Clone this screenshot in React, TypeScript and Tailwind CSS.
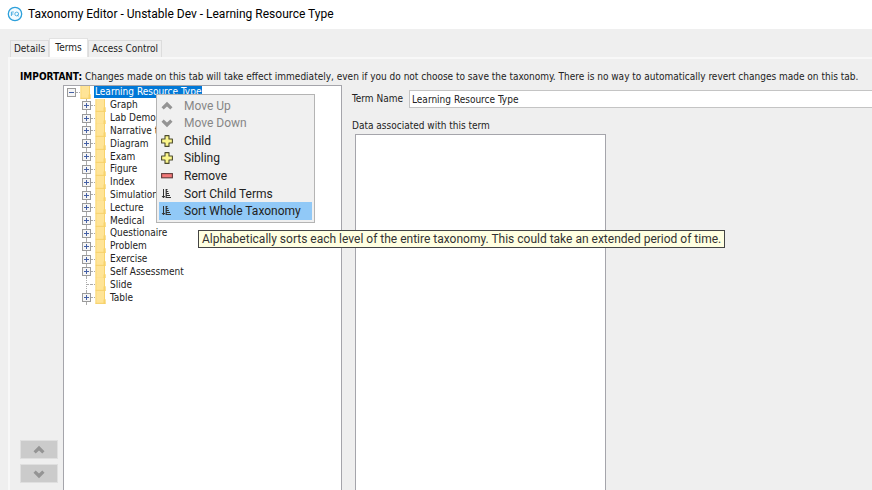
import { useState } from "react";

const TAHOMA = "font-['DejaVu_Sans_Condensed','DejaVu_Sans',sans-serif]";
const SEGOE = "font-[Roboto,'Open_Sans',sans-serif]";

const TERMS = [
  { name: "Graph", leaf: false },
  { name: "Lab Demo", leaf: false },
  { name: "Narrative t", leaf: false },
  { name: "Diagram", leaf: false },
  { name: "Exam", leaf: false },
  { name: "Figure", leaf: false },
  { name: "Index", leaf: false },
  { name: "Simulation", leaf: false },
  { name: "Lecture", leaf: false },
  { name: "Medical", leaf: false },
  { name: "Questionaire", leaf: false },
  { name: "Problem", leaf: false },
  { name: "Exercise", leaf: false },
  { name: "Self Assessment", leaf: false },
  { name: "Slide", leaf: true },
  { name: "Table", leaf: false },
];

function Logo() {
  return (
    <svg width="16" height="16" viewBox="0 0 16 16" fill="none" aria-hidden="true">
      <circle cx="8" cy="8" r="6.7" fill="#f4fbff" stroke="#2da0db" strokeWidth="1.3" />
      <path d="M4.4 10V6h2.4M4.4 8h2" stroke="#2da0db" strokeWidth="0.8" />
      <circle cx="9.7" cy="8" r="1.9" stroke="#2da0db" strokeWidth="0.8" />
      <path d="M10 8.8l1.7 1.5" stroke="#2da0db" strokeWidth="0.8" />
    </svg>
  );
}

function Chevron({ up = false }: { up?: boolean }) {
  return (
    <svg width="12" height="12" viewBox="0 0 12 12" aria-hidden="true">
      <path
        d={up ? "M6 1.8L11.5 7.2L9.3 9.5L6 6.4L2.7 9.5L.5 7.2Z" : "M6 10.2L11.5 4.8L9.3 2.5L6 5.6L2.7 2.5L.5 4.8Z"}
        fill="#949494"
      />
    </svg>
  );
}

function Plus() {
  return (
    <svg width="12" height="12" viewBox="0 0 12 12" aria-hidden="true">
      <path
        d="M4 .6h4V4h3.4v4H8v3.4H4V8H.6V4H4Z"
        fill="#fbf68c"
        stroke="#4d4c30"
        strokeWidth="1.1"
        strokeLinejoin="round"
      />
    </svg>
  );
}

function Minus() {
  return (
    <svg width="12" height="12" viewBox="0 0 12 12" aria-hidden="true">
      <rect x=".6" y="3.6" width="10.8" height="4.2" fill="#f17878" stroke="#633b3b" strokeWidth="1.1" />
    </svg>
  );
}

function SortIcon() {
  return (
    <svg width="12" height="12" viewBox="0 0 12 12" stroke="#333" fill="none" aria-hidden="true">
      <path d="M2.5 1v8.5M1 8l1.5 1.8L4 8" strokeWidth="1" />
      <path d="M4.8 1.5h1.7M4.8 3.5h2.5M4.8 5.5h3.2M4.8 7.5h4.2M4.8 9.5h5.2M5.2 1v9" strokeWidth="1.2" />
    </svg>
  );
}

function Folder() {
  return (
    <svg className="block h-full w-[11px] shrink-0" viewBox="0 0 11 13" preserveAspectRatio="none" aria-hidden="true">
      <path d="M.5 0H9V8H10.5V13H.5Z" fill="#ffe497" />
      <path d="M.5 0H1.5V13H.5Z" fill="#fbd97a" />
      <path d="M9 0h1v8.5h-1ZM8.5 8.5h2V13h-2Z" fill="#f8d36c" />
      <path d="M.5 12h10v1H.5Z" fill="#f6cf66" />
    </svg>
  );
}

function Expander({ open = false, label }: { open?: boolean; label: string }) {
  return (
    <button type="button" aria-label={label} className="block size-[9px] shrink-0">
      <svg width="9" height="9" viewBox="0 0 9 9" shapeRendering="crispEdges" aria-hidden="true">
        <rect x=".5" y=".5" width="8" height="8" fill="#f5f5f5" stroke="#9a9a9a" />
        <path d={open ? "M2 4.5h5" : "M2 4.5h5M4.5 2v5"} stroke="#4560a5" />
      </svg>
    </button>
  );
}

const MENU = [
  { label: "Move Up", icon: <Chevron up />, disabled: true },
  { label: "Move Down", icon: <Chevron />, disabled: true },
  { label: "Child", icon: <Plus /> },
  { label: "Sibling", icon: <Plus /> },
  { label: "Remove", icon: <Minus /> },
  { label: "Sort Child Terms", icon: <SortIcon /> },
  { label: "Sort Whole Taxonomy", icon: <SortIcon />, active: true },
];

function ContextMenu() {
  return (
    <div
      role="menu"
      className={`absolute top-[8px] left-[92px] z-10 grid h-[129px] w-[159px] auto-rows-fr border border-[#b4b4b4] bg-[#f0f0f0] p-[2px] text-[12px] text-[#222] ${SEGOE}`}
    >
      {MENU.map((item) => (
        <button
          key={item.label}
          type="button"
          role="menuitem"
          disabled={item.disabled}
          className={`flex min-h-0 items-center gap-[11px] pl-[2px] text-left leading-[16px] whitespace-nowrap disabled:text-[#868686] ${
            item.active ? "bg-[#91c9f7]" : ""
          }`}
        >
          {item.icon}
          {item.label}
        </button>
      ))}
    </div>
  );
}

function Tree() {
  return (
    <ul role="tree" aria-label="Terms" className="grid h-[218px] auto-rows-fr text-[10px] leading-[12px] text-[#222]">
      <li role="treeitem" aria-selected="true" className="flex min-h-0 items-center pl-[3px]">
        <Expander open label="Collapse Learning Resource Type" />
        <span className="w-[4px] border-t border-dotted border-[#aaa]" />
        <Folder />
        <span className="ml-[3px] bg-[#0078d7] px-px text-white">Learning Resource Type</span>
      </li>
      {TERMS.map((term) => (
        <li key={term.name} role="treeitem" aria-selected="false" className="flex min-h-0 items-center pl-[18px]">
          {term.leaf ? (
            <span className="flex h-full w-[9px] items-center pl-[4px]">
              <span className="h-full border-l border-dotted border-[#aaa]" />
              <span className="grow border-t border-dotted border-[#aaa]" />
            </span>
          ) : (
            <span className="flex h-full flex-col items-center">
              <span className="grow border-l border-dotted border-[#aaa]" />
              <Expander label={`Expand ${term.name}`} />
              <span className="grow border-l border-dotted border-[#aaa]" />
            </span>
          )}
          <span className="w-[4px] border-t border-dotted border-[#aaa]" />
          <Folder />
          <span className="ml-[4px] whitespace-nowrap">{term.name}</span>
        </li>
      ))}
    </ul>
  );
}

export default function App() {
  const [name, setName] = useState("Learning Resource Type");
  return (
    <div className={`flex h-screen flex-col overflow-hidden bg-[#efefef] text-[10px] leading-[12px] text-[#222] ${TAHOMA}`}>
      <header className={`flex h-[29px] shrink-0 items-center gap-[5px] bg-white pb-px pl-[7px] text-black ${SEGOE}`}>
        <Logo />
        <h1 className="text-[12px] leading-[16px] whitespace-nowrap">
          Taxonomy Editor - Unstable Dev - Learning Resource Type
        </h1>
      </header>

      <div role="tablist" className="flex h-[28px] shrink-0 items-end pl-[10px]">
        <button type="button" role="tab" aria-selected="false" className="h-[17px] w-[39px] border border-b-0 border-[#dcdcdc] text-center">
          Details
        </button>
        <button type="button" role="tab" aria-selected="true" className="h-[19px] w-[39px] border border-b-0 border-[#e2e2e2] bg-white text-center">
          Terms
        </button>
        <button type="button" role="tab" aria-selected="false" className="h-[17px] w-[74px] border border-b-0 border-[#dcdcdc] text-center">
          Access Control
        </button>
      </div>

      <main className="ml-[8px] flex min-h-0 grow flex-col border-t-2 border-l-2 border-[#f8f8f8]">
        <p className="mt-[12px] mb-[2px] pl-[10px] whitespace-nowrap">
          <strong className="text-black">IMPORTANT:</strong> Changes made on this tab will take effect immediately, even if
          you do not choose to save the taxonomy. There is no way to automatically revert changes made on this tab.
        </p>
        <div className="flex min-h-0 grow">
          <div className="flex w-[53px] shrink-0 flex-col justify-end gap-[5px] pb-[7px] pl-[10px]">
            <button type="button" aria-label="Move term up" className="flex h-[19px] w-[38px] items-center justify-center border border-[#dfdfdf] bg-[#cbcbcb]">
              <Chevron up />
            </button>
            <button type="button" aria-label="Move term down" className="flex h-[19px] w-[38px] items-center justify-center border border-[#dfdfdf] bg-[#cbcbcb]">
              <Chevron />
            </button>
          </div>
          <section className="relative w-[279px] shrink-0 border border-b-0 border-[#a5a5ab] bg-white">
            <Tree />
            <ContextMenu />
            <div
              role="tooltip"
              className={`absolute top-[144px] left-[134px] z-20 border border-[#444] bg-[#ffffe1] px-[3px] text-[12px] leading-[16px] whitespace-nowrap text-[#333] ${SEGOE}`}
            >
              Alphabetically sorts each level of the entire taxonomy. This could take an extended period of time.
            </div>
          </section>
          <section className="flex grow flex-col pt-[5px] pl-[10px]">
            <div className="flex items-center">
              <label htmlFor="term-name" className="w-[57px] whitespace-nowrap">Term Name</label>
              <input
                id="term-name"
                value={name}
                onChange={(e) => setName(e.target.value)}
                className="h-[18px] min-w-0 grow border border-r-0 border-[#c4c4c4] bg-white px-[2px] outline-none"
              />
            </div>
            <label htmlFor="term-data" className="mt-[12px]">Data associated with this term</label>
            <textarea
              id="term-data"
              className="mt-[2px] ml-[3px] block w-[251px] grow resize-none border border-b-0 border-[#a5a5ab] bg-white outline-none"
            />
          </section>
        </div>
      </main>
    </div>
  );
}
